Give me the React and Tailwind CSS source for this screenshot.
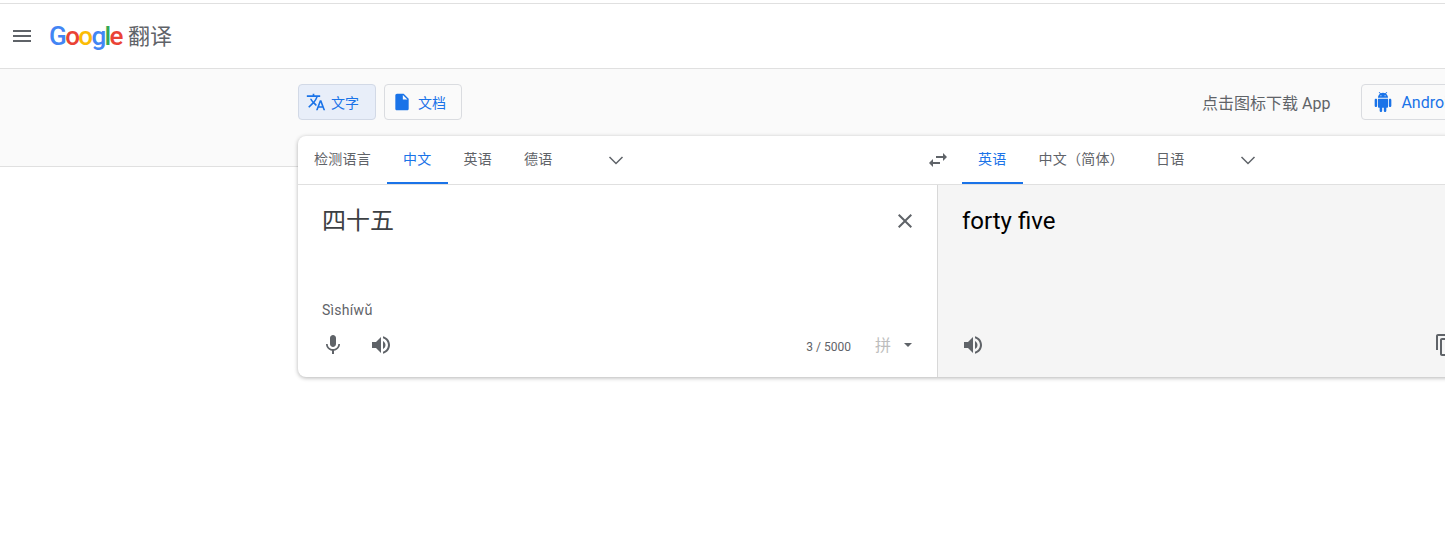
const P = {
  menu: "M3 18h18v-2H3v2zm0-5h18v-2H3v2zm0-7v2h18V6H3z",
  translate: "M12.87 15.07l-2.54-2.51.03-.03c1.74-1.94 2.98-4.17 3.71-6.53H17V4h-7V2H8v2H1v1.99h11.17C11.5 7.92 10.44 9.75 9 11.35 8.07 10.32 7.3 9.19 6.69 8h-2c.73 1.63 1.73 3.17 2.98 4.56l-5.09 5.02L4 19l5-5 3.11 3.11.76-2.04zM18.5 10h-2L12 22h2l1.12-3h4.75L21 22h2l-4.5-12zm-2.62 7l1.62-4.33L19.12 17h-3.24z",
  doc: "M6 2c-1.1 0-1.99.9-1.99 2L4 20c0 1.1.89 2 1.99 2H18c1.1 0 2-.9 2-2V8l-6-6H6zm7 7V3.5L18.5 9H13z",
  android: "M6 18c0 .55.45 1 1 1h1v3.5c0 .83.67 1.5 1.5 1.5s1.5-.67 1.5-1.5V19h2v3.5c0 .83.67 1.5 1.5 1.5s1.5-.67 1.5-1.5V19h1c.55 0 1-.45 1-1V8H6v10zM3.5 8C2.67 8 2 8.67 2 9.5v7c0 .83.67 1.5 1.5 1.5S5 17.33 5 16.5v-7C5 8.67 4.33 8 3.5 8zm17 0c-.83 0-1.5.67-1.5 1.5v7c0 .83.67 1.5 1.5 1.5s1.5-.67 1.5-1.5v-7c0-.83-.67-1.5-1.5-1.5zm-4.97-5.84l1.3-1.3c.2-.2.2-.51 0-.71-.2-.2-.51-.2-.71 0l-1.48 1.48C13.85 1.23 12.95 1 12 1c-.96 0-1.86.23-2.66.63L7.85.15c-.2-.2-.51-.2-.71 0-.2.2-.2.51 0 .71l1.31 1.31C6.97 3.26 6 5.01 6 7h12c0-1.99-.97-3.75-2.47-4.84zM10 5H9V4h1v1zm5 0h-1V4h1v1z",
  mic: "M12 14c1.66 0 2.99-1.34 2.99-3L15 5c0-1.66-1.34-3-3-3S9 3.34 9 5v6c0 1.66 1.34 3 3 3zm5.3-3c0 3-2.54 5.1-5.3 5.1S6.7 14 6.7 11H5c0 3.41 2.72 6.23 6 6.72V21h2v-3.28c3.28-.48 6-3.3 6-6.72h-1.7z",
  vol: "M3 9v6h4l5 5V4L7 9H3zm13.5 3c0-1.77-1.02-3.29-2.5-4.03v8.05c1.48-.73 2.5-2.25 2.5-4.02zM14 3.23v2.06c2.89.86 5 3.54 5 6.71s-2.11 5.85-5 6.71v2.06c4.01-.91 7-4.49 7-8.77s-2.99-7.86-7-8.77z",
  swap: "M6.99 11L3 15l3.99 4v-3H14v-2H6.99v-3zM21 9l-3.99-4v3H10v2h7.01v3L21 9z",
  copy: "M16 1H4c-1.1 0-2 .9-2 2v14h2V3h12V1zm3 4H8c-1.1 0-2 .9-2 2v14c0 1.1.9 2 2 2h11c1.1 0 2-.9 2-2V7c0-1.1-.9-2-2-2zm0 16H8V7h11v14z",
  close: "M19 6.41L17.59 5 12 10.59 6.41 5 5 6.41 10.59 12 5 17.59 6.41 19 12 13.41 17.59 19 19 17.59 13.41 12z",
};

function Icon({ d, className }) {
  return (
    <svg viewBox="0 0 24 24" className={className} fill="currentColor">
      <path d={P[d]} />
    </svg>
  );
}

function Chevron({ className }) {
  return (
    <svg viewBox="0 0 24 24" className={className} fill="none" stroke="currentColor" strokeWidth="1.5">
      <path d="M5.5 9l6.500 6.500L18.500 9" />
    </svg>
  );
}

function Tab({ children, active }) {
  return (
    <div
      className={
        "h-full flex items-center justify-center px-4 text-[14px] tracking-[0.25px] border-b-2 whitespace-nowrap " +
        (active ? "text-[#1a73e8] border-[#1a73e8]" : "text-[#5f6368] border-transparent")
      }
    >
      {children}
    </div>
  );
}

export default function App() {
  return (
    <div className="w-[1445px] h-[557px] overflow-hidden bg-white font-['Roboto','Noto_Sans_CJK_SC',sans-serif] text-[#5f6368]">
      <header className="mt-[3px] h-[66px] border-y border-[#e0e0e0] flex items-center">
        <Icon d="menu" className="w-6 h-6 ml-[10px]" />
        <div className="ml-[15px] flex items-center">
          <span className="font-medium text-[26px] tracking-[-1.6px] leading-none">
            <span className="text-[#4285f4]">G</span>
            <span className="text-[#ea4335]">o</span>
            <span className="text-[#fbbc05]">o</span>
            <span className="text-[#4285f4]">g</span>
            <span className="text-[#34a853]">l</span>
            <span className="text-[#ea4335]">e</span>
          </span>
          <span className="ml-[6px] mt-[2px] text-[22px] leading-none">翻译</span>
        </div>
      </header>

      <section className="h-[98px] bg-[#fafafa] border-b border-[#e0e0e0] pl-[298px] pt-[15px]">
        <div className="flex items-start w-[1280px]">
          <div className="w-[78px] h-[36px] rounded border border-[#d2d9e6] bg-[#e8eef9] flex items-center pl-[7px] text-[#1a73e8]">
            <Icon d="translate" className="w-5 h-5" />
            <span className="ml-[5px] mt-[2px] text-[14px] leading-none">文字</span>
          </div>
          <div className="ml-2 w-[78px] h-[36px] rounded border border-[#dadce0] flex items-center pl-[7px] text-[#1a73e8]">
            <Icon d="doc" className="w-5 h-5" />
            <span className="ml-[6px] mt-[2px] text-[14px] leading-none">文档</span>
          </div>
          <span className="ml-[740px] mt-[12px] text-[16px] leading-none whitespace-nowrap">点击图标下载 App</span>
          <div className="ml-[31px] w-[140px] h-[36px] rounded border border-[#dadce0] flex items-center pl-[11px] text-[#1a73e8]">
            <Icon d="android" className="w-5 h-5" />
            <span className="ml-[8px] mt-[2px] text-[16px] leading-none">Android</span>
          </div>
        </div>
      </section>

      <section className="relative -mt-[31px] ml-[298px] w-[1280px] h-[241px] bg-white rounded-lg shadow-[0_1px_4px_rgba(0,0,0,0.3)] overflow-hidden flex flex-col">
        <div className="h-[49px] shrink-0 border-b border-[#e0e0e0] flex">
          <div className="w-[640px] shrink-0 flex items-center">
            <Tab>检测语言</Tab>
            <Tab active>中文</Tab>
            <Tab>英语</Tab>
            <Tab>德语</Tab>
            <Chevron className="w-6 h-6 ml-[35px]" />
          </div>
          <div className="flex items-center">
            <Icon d="swap" className="w-6 h-6 -ml-[12px]" />
            <div className="ml-[12px] h-full">
              <Tab active>英语</Tab>
            </div>
            <Tab>中文（简体）</Tab>
            <Tab>日语</Tab>
            <Chevron className="w-6 h-6 ml-[35px]" />
          </div>
        </div>
        <div className="flex-1 flex min-h-0">
          <div className="w-[640px] shrink-0 border-r border-[#d8d8d8] flex flex-col">
            <div className="flex justify-between pl-6 pr-[20px] pt-[18px]">
              <span className="text-[24px] leading-[36px] text-[#3c4043]">四十五</span>
              <Icon d="close" className="w-6 h-6 mt-[6px]" />
            </div>
            <div className="mt-auto mb-[1px] pl-6 text-[14px] tracking-[0.25px] leading-5">Sìshíwǔ</div>
            <div className="h-[48px] mb-2 flex items-center pl-6 pr-[25px]">
              <Icon d="mic" className="w-6 h-6 -ml-[1px]" />
              <Icon d="vol" className="w-6 h-6 ml-6" />
              <span className="ml-auto text-[12px] leading-none mt-[4px]">3 / 5000</span>
              <span className="ml-6 mt-[2px] text-[16px] leading-none text-[#bdbdbd]">拼</span>
              <svg viewBox="0 0 8 4" className="w-2 h-1 ml-[13px] mb-[1px]" fill="currentColor">
                <path d="M0 0h8L4 4z" />
              </svg>
            </div>
          </div>
          <div className="flex-1 bg-[#f5f5f5] flex flex-col pl-6">
            <div className="pt-[18px] text-[24px] leading-[36px] text-black">forty five</div>
            <div className="mt-auto h-[48px] mb-2 flex items-center">
              <Icon d="vol" className="w-6 h-6 -ml-[1px]" />
              <Icon d="copy" className="w-6 h-6 ml-[449px]" />
            </div>
          </div>
        </div>
      </section>
    </div>
  );
}
